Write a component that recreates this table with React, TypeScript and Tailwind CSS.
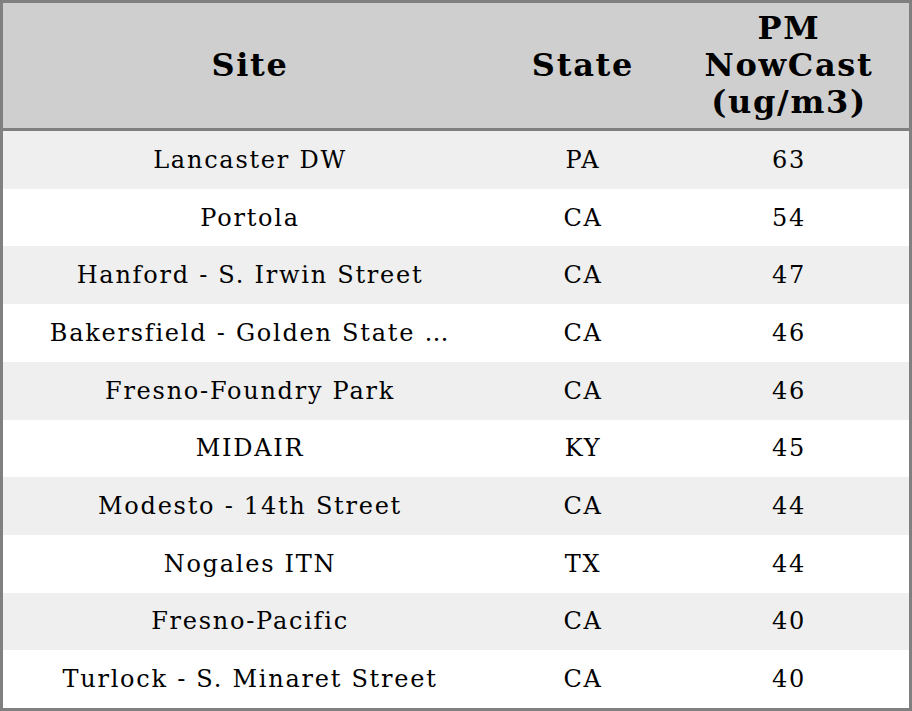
const rows = [
  { site: 'Lancaster DW', state: 'PA', pm: 63 },
  { site: 'Portola', state: 'CA', pm: 54 },
  { site: 'Hanford - S. Irwin Street', state: 'CA', pm: 47 },
  { site: 'Bakersfield - Golden State …', state: 'CA', pm: 46 },
  { site: 'Fresno-Foundry Park', state: 'CA', pm: 46 },
  { site: 'MIDAIR', state: 'KY', pm: 45 },
  { site: 'Modesto - 14th Street', state: 'CA', pm: 44 },
  { site: 'Nogales ITN', state: 'TX', pm: 44 },
  { site: 'Fresno-Pacific', state: 'CA', pm: 40 },
  { site: 'Turlock - S. Minaret Street', state: 'CA', pm: 40 }
];

export default function App() {
  return (
    <div
      className="w-[912px] h-[711px] bg-white text-black"
      style={{ fontFamily: '"DejaVu Serif", "Liberation Serif", serif' }}
    >
      <div className="flex flex-col h-full border-[3px] border-[#808080]">
        <div className="grid grid-cols-[494px_172px_240px] h-[128px] shrink-0 bg-[#cfcfcf] border-b-[3px] border-[#808080] text-[32px] font-bold leading-[37px] tracking-[1.7px]">
          <div className="flex items-center justify-center text-center">Site</div>
          <div className="flex items-center justify-center text-center">State</div>
          <div className="flex items-center justify-center text-center">
            PM
            <br />
            NowCast
            <br />
            (ug/m3)
          </div>
        </div>
        <div className="flex flex-col flex-1 text-[24px] tracking-[1.75px]">
          {rows.map((r, i) => (
            <div
              key={i}
              className={`grid grid-cols-[494px_172px_240px] flex-1 items-center ${
                i % 2 === 0 ? 'bg-[#efefef]' : 'bg-white'
              }`}
            >
              <div className="text-center whitespace-nowrap">{r.site}</div>
              <div className="text-center">{r.state}</div>
              <div className="text-center">{r.pm}</div>
            </div>
          ))}
        </div>
      </div>
    </div>
  );
}
